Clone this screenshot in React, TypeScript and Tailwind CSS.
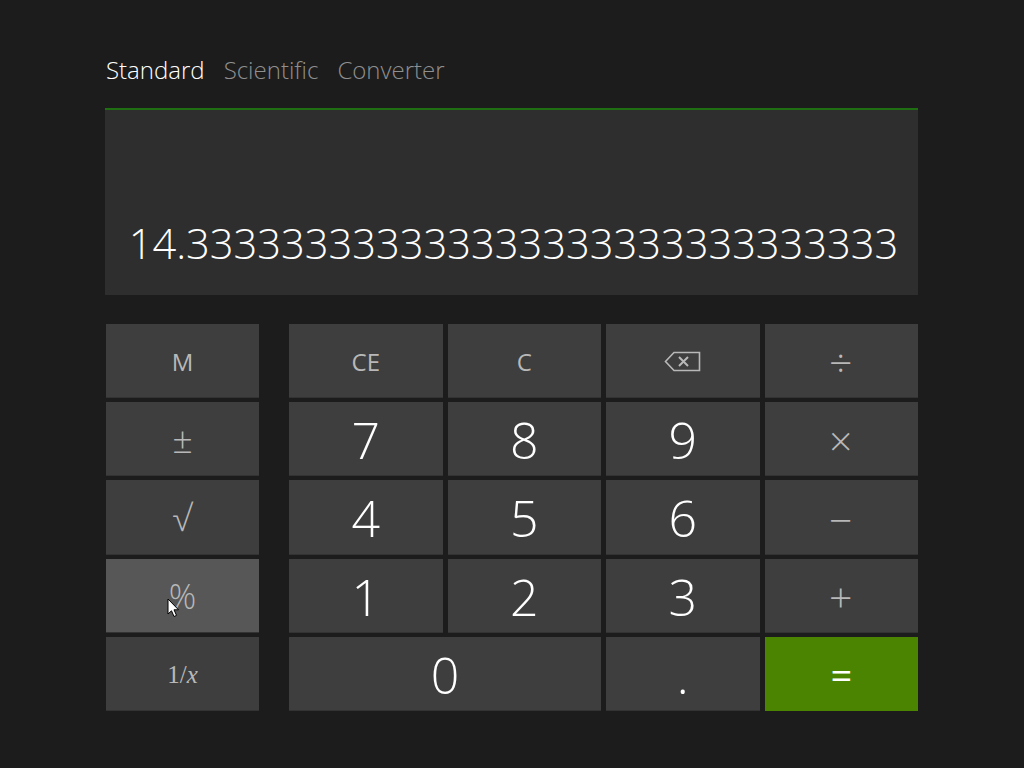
import type { ReactNode } from "react";

const font = "font-['Open_Sans','Noto_Sans',sans-serif]";

const Key = ({
  children,
  className = "",
}: {
  children: ReactNode;
  className?: string;
}) => (
  <button
    className={`flex items-center justify-center bg-[#3e3e3e] text-[#b8b8b8] border-b border-[#333333] ${className}`}
  >
    {children}
  </button>
);

const Digit = ({ value }: { value: string }) => (
  <Key className="text-white text-[50px] font-light leading-none pt-[3px]">{value}</Key>
);

// operators on the right column are drawn wider than the ones on the left
const Op = ({ value, className = "pt-[3px]" }: { value: string; className?: string }) => (
  <Key className={`text-[41px] font-light leading-none pr-px ${className}`}>{value}</Key>
);

const SideOp = ({ value }: { value: string }) => (
  <Key className="text-[36px] font-light leading-none pt-[2px]">{value}</Key>
);

const Word = ({ value }: { value: string }) => (
  <Key className="text-[24px] font-normal leading-none pt-[3px]">{value}</Key>
);

const BackspaceIcon = () => (
  <svg width="37" height="21" viewBox="0 0 37 21" fill="none" stroke="#b8b8b8" strokeWidth="1.6">
    <path d="M10 1.5H35.5V19.5H10L1.5 10.5Z" />
    <path d="M15 6L24 15M24 6L15 15" strokeWidth="2" />
  </svg>
);

const Cursor = () => (
  <svg
    className="absolute left-[61px] top-[39px]"
    width="13"
    height="20"
    viewBox="0 0 13 20"
  >
    <path d="M1 1V16L4.5 12.8L7 18.5L9.5 17.4L7 11.8H11.5Z" fill="#fff" stroke="#000" strokeWidth="1" />
  </svg>
);

const App = () => {
  return (
    <div className={`w-[1024px] h-[768px] overflow-hidden bg-[#1c1c1c] px-[105px] pt-[52px] ${font}`}>
      <div className="flex gap-[20px] h-[56px] text-[24px] font-light leading-[36px] pl-px text-[#8f8f8f]">
        <span className="text-white">Standard</span>
        <span className="-ml-px">Scientific</span>
        <span className="-ml-px">Converter</span>
      </div>

      <div className="h-[187px] w-[813px] bg-[#2e2e2e] border-t-2 border-[#1f6f12] flex items-end justify-center pb-[24px] pl-[4px]">
        <span className="text-white text-[41.6px] font-light leading-[56px] whitespace-nowrap">
          14.333333333333333333333333333333
        </span>
      </div>

      <div className="flex mt-[29px] ml-px gap-[30px]">
        <div className="w-[153px] h-[387px] grid grid-rows-5 gap-[4px]">
          <Word value="M" />
          <SideOp value="±" />
          <SideOp value="√" />
          <Key className="relative bg-[#575757] text-[34px] font-light leading-none pt-[2px]">
            %
            <Cursor />
          </Key>
          <Key className="text-[25px] leading-none pt-[2px] font-['Liberation_Serif',serif]">
            1/<i>x</i>
          </Key>
        </div>

        <div className="w-[629px] h-[387px] grid grid-cols-4 grid-rows-5 gap-x-[5px] gap-y-[4px]">
          <Word value="CE" />
          <Word value="C" />
          <Key className="pt-[1px]">
            <BackspaceIcon />
          </Key>
          <Op value="÷" />
          <Digit value="7" />
          <Digit value="8" />
          <Digit value="9" />
          <Op value="×" />
          <Digit value="4" />
          <Digit value="5" />
          <Digit value="6" />
          <Op value="−" className="pt-[6px]" />
          <Digit value="1" />
          <Digit value="2" />
          <Digit value="3" />
          <Op value="+" />
          <Key className="col-span-2 text-white text-[50px] font-light leading-none pt-[3px]">0</Key>
          <Digit value="." />
          <Key className="bg-[#4a8400] text-white text-[38px] leading-none border-none">=</Key>
        </div>
      </div>
    </div>
  );
};

export default App;
